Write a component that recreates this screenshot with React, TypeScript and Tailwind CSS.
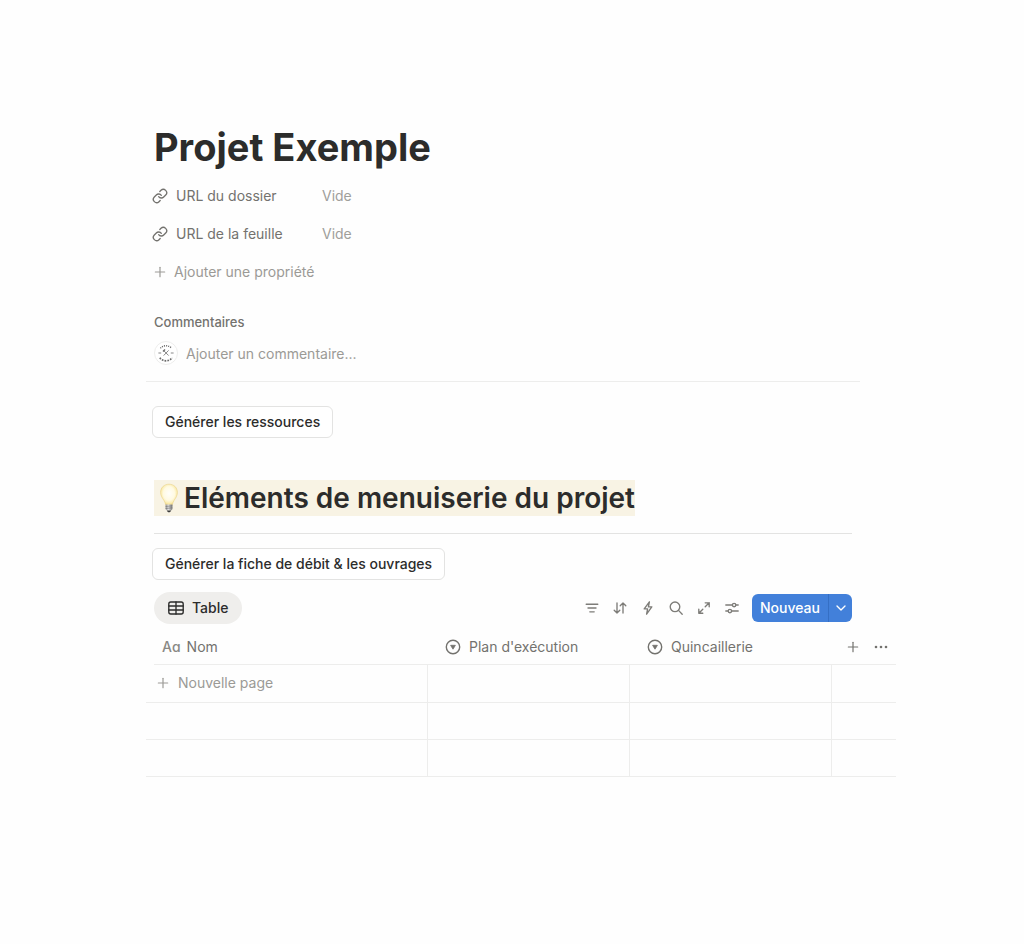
import { useState } from "react";
import type { ReactNode } from "react";
import { ChevronDown, Link, Plus } from "lucide-react";

const properties = [
  { id: "dossier", label: "URL du dossier" },
  { id: "feuille", label: "URL de la feuille" },
];

// Thin-line icon on a 16px grid, shared by the toolbar and the table tab
function LineIcon({ children, className = "size-4" }: { children: ReactNode; className?: string }) {
  return (
    <svg
      className={className}
      viewBox="0 0 16 16"
      fill="none"
      stroke="currentColor"
      strokeWidth={1.35}
      strokeLinecap="round"
      strokeLinejoin="round"
      aria-hidden="true"
    >
      {children}
    </svg>
  );
}

const tools: { label: string; icon: ReactNode }[] = [
  { label: "Filtrer", icon: <path d="M2.2 4.2h11.6M4 8h8M5.8 11.8h4.4" /> },
  {
    label: "Trier",
    icon: <path d="M5 3v10M2.2 10.2 5 13l2.8-2.8M11 13V3M8.2 5.8 11 3l2.8 2.8" />,
  },
  { label: "Automatisations", icon: <path d="M9.4 1.8 4.2 8.9h3.4l-1 5.3 5.2-7.3H8.4z" /> },
  {
    label: "Rechercher",
    icon: (
      <>
        <circle cx="7" cy="6.8" r="4.8" />
        <path d="m10.5 10.4 3.7 3.8" />
      </>
    ),
  },
  {
    label: "Ouvrir en pleine page",
    icon: <path d="M9.2 6.8 13.2 2.8M9.2 2.8h4v4M6.8 9.2l-4 4M2.8 9.2v4h4" />,
  },
  {
    label: "Options",
    icon: (
      <>
        <path d="M1.8 5h6.5M12 5h2.2M1.8 11H4M7.7 11h6.5" />
        <circle cx="10.1" cy="5" r="1.7" />
        <circle cx="5.9" cy="11" r="1.7" />
      </>
    ),
  },
];

function SelectIcon() {
  return (
    <svg className="size-4 shrink-0" viewBox="0 0 16 16" fill="none" aria-hidden="true">
      <circle cx="8" cy="8" r="6.7" stroke="currentColor" strokeWidth={1.4} />
      <path
        d="M5.6 6.3h4.8L8 10.2z"
        fill="currentColor"
        stroke="currentColor"
        strokeWidth={0.8}
        strokeLinejoin="round"
      />
    </svg>
  );
}

function Avatar() {
  return (
    <svg className="size-6 shrink-0" viewBox="0 0 24 24" fill="none" aria-hidden="true">
      <circle cx="12" cy="12" r="11.5" fill="#fff" stroke="#e9e9e7" strokeWidth={0.8} />
      <g stroke="#6b6b6b">
        <path d="M6.4 7.2a7.6 7.6 0 0 1 11.2 0" strokeWidth={1.4} strokeDasharray="1.1 1" />
        <path d="M5.8 16.8a7.9 7.9 0 0 0 12.4 0" strokeWidth={1.7} strokeDasharray="1.7 1.1" />
        <path d="M4.4 12h2.8M16.8 12h2.8" strokeWidth={0.8} />
        <path d="m9.7 9.6 5 5M14.6 9.4l-5 5.2" strokeWidth={0.8} />
        <path d="m9 10.6 2-2" strokeWidth={1.4} />
      </g>
    </svg>
  );
}

function Bulb() {
  return (
    <svg className="h-[30px] w-[30px] shrink-0" viewBox="0 0 30 30" aria-hidden="true">
      <defs>
        <radialGradient id="glass" cx="50%" cy="45%" r="55%">
          <stop offset="0" stopColor="#fffefa" />
          <stop offset="0.6" stopColor="#fffae2" />
          <stop offset="0.85" stopColor="#fbedb2" />
          <stop offset="1" stopColor="#edd686" />
        </radialGradient>
        <linearGradient id="cap" x1="0" x2="1" y1="0" y2="0">
          <stop offset="0" stopColor="#8b8b8b" />
          <stop offset="0.4" stopColor="#e4e4e4" />
          <stop offset="1" stopColor="#777" />
        </linearGradient>
      </defs>
      <path
        d="M15 1.2c-5 0-8.4 3.6-8.4 8.2 0 3.4 1.8 5.6 3.3 8 1 1.6 1.4 3 1.8 4.4h6.6c.4-1.4.8-2.8 1.8-4.4 1.5-2.4 3.3-4.6 3.3-8 0-4.6-3.4-8.2-8.4-8.2z"
        fill="url(#glass)"
        stroke="#e9d288"
        strokeWidth={0.6}
      />
      <path d="M11.6 21.6h6.8v4.6l-1.4 1.4h-4l-1.4-1.4z" fill="url(#cap)" />
      <path d="m11.6 23.5 6.8-.7M11.6 25.5l6.8-.7" stroke="#6c6c6c" strokeWidth={0.6} />
      <path d="M12.8 27.4h4.4c-.4 1.2-1.2 1.8-2.2 1.8s-1.8-.6-2.2-1.8z" fill="#3c3c3c" />
    </svg>
  );
}

function ActionButton({ children }: { children: ReactNode }) {
  return (
    <button
      type="button"
      className="ml-1.5 h-8 rounded-md border border-[#e3e3e2] bg-white px-3 text-sm font-medium text-[#2c2c2b] hover:bg-stone-50"
    >
      {children}
    </button>
  );
}

export default function App() {
  const [comment, setComment] = useState("");

  return (
    <main className="min-h-screen bg-[#fefefe] pt-[122px] pr-[164px] pb-40 pl-[146px] font-['Inter','Liberation_Sans',sans-serif] text-sm text-[#2c2c2b]">
      <h1 className="pl-2 text-[38px] leading-[50px] font-bold">Projet Exemple</h1>

      {/* Page properties */}
      <div className="mt-2 flex flex-col gap-1.5">
        {properties.map((prop) => (
          <div key={prop.id} className="flex h-8 items-center">
            <div className="flex w-[176px] items-center gap-2 pl-1.5 text-[#73726e]">
              <Link className="size-4" strokeWidth={2} aria-hidden="true" />
              <span id={prop.id}>{prop.label}</span>
            </div>
            <button type="button" aria-labelledby={prop.id} className="text-[#a09f9b]">
              Vide
            </button>
          </div>
        ))}
        <button type="button" className="flex h-8 items-center gap-1.5 self-start pl-1.5 text-[#9b9a96]">
          <Plus className="size-4" strokeWidth={1.8} aria-hidden="true" />
          Ajouter une propriété
        </button>
      </div>

      {/* Comments */}
      <section className="mt-6 border-b border-[#ededec] pb-4">
        <h2 className="pl-2 text-[13px] leading-5 font-medium text-[#73726e]">Commentaires</h2>
        <div className="mt-[9px] flex items-center gap-2 pl-2">
          <Avatar />
          <input
            type="text"
            value={comment}
            onChange={(e) => setComment(e.target.value)}
            placeholder="Ajouter un commentaire..."
            aria-label="Ajouter un commentaire"
            className="h-6 flex-1 bg-transparent outline-none placeholder:text-[#9b9a96]"
          />
        </div>
      </section>

      <div className="mt-6">
        <ActionButton>Générer les ressources</ActionButton>
      </div>

      <div className="mx-2 mt-[42px] border-b border-[#e3e3e2] pb-[17px]">
        <h2 className="flex h-9 w-fit items-center bg-[#f8f3e4] text-[28px] leading-9 font-semibold whitespace-nowrap">
          <Bulb />
          Eléments de menuiserie du projet
        </h2>
      </div>

      <div className="mt-3.5">
        <ActionButton>Générer la fiche de débit &amp; les ouvrages</ActionButton>
      </div>

      {/* View tab and database toolbar */}
      <div className="mx-2 mt-3 flex items-center justify-between">
        <button
          type="button"
          className="flex h-8 items-center gap-2 rounded-full bg-[#efeeec] px-3.5 font-medium text-[#2c2c2b]"
        >
          <LineIcon>
            <rect x="0.8" y="2" width="14.4" height="12" rx="2" />
            <path d="M.8 6h14.4M.8 10h14.4M8 2v12" />
          </LineIcon>
          Table
        </button>
        <div className="flex items-center">
          <div className="mr-3 flex gap-3 text-[#7d7c78]">
            {tools.map((tool) => (
              <button key={tool.label} type="button" aria-label={tool.label}>
                <LineIcon>{tool.icon}</LineIcon>
              </button>
            ))}
          </div>
          <div className="flex h-7 overflow-hidden rounded-md bg-[#4280da] text-white">
            <button type="button" className="px-2 font-medium">
              Nouveau
            </button>
            <button
              type="button"
              aria-label="Autres options de création"
              className="flex w-6 items-center justify-center border-l border-[#356fc4]"
            >
              <ChevronDown className="size-4" strokeWidth={2} />
            </button>
          </div>
        </div>
      </div>

      <div className="-mr-9 mt-[5px]">
        <table className="w-full table-fixed border-collapse text-[#73726e]">
          <colgroup>
            <col className="w-[281px]" />
            <col className="w-[202px]" />
            <col className="w-[202px]" />
            <col />
          </colgroup>
          <thead>
            <tr>
              <th scope="col" className="p-0 text-left font-normal">
                <div className="ml-2 flex h-9 items-center gap-1.5 border-b border-[#ededec] pl-2">
                  <span className="font-medium text-[#8a8985]" aria-hidden="true">
                    Aɑ
                  </span>
                  Nom
                </div>
              </th>
              {["Plan d'exécution", "Quincaillerie"].map((name) => (
                <th key={name} scope="col" className="p-0 text-left font-normal">
                  <div className="flex h-9 items-center gap-2 border-b border-[#ededec] pl-[18px]">
                    <SelectIcon />
                    {name}
                  </div>
                </th>
              ))}
              <th scope="col" className="p-0 font-normal">
                <div className="flex h-9 items-center gap-3 border-b border-[#ededec] pl-3.5">
                  <button type="button" aria-label="Ajouter une colonne">
                    <Plus className="size-4" strokeWidth={1.8} />
                  </button>
                  <button type="button" aria-label="Plus d'options">
                    <svg className="size-4" viewBox="0 0 16 16" fill="currentColor" aria-hidden="true">
                      <circle cx="3" cy="8" r="1.3" />
                      <circle cx="8" cy="8" r="1.3" />
                      <circle cx="13" cy="8" r="1.3" />
                    </svg>
                  </button>
                </div>
              </th>
            </tr>
          </thead>
          <tbody>
            {[0, 1, 2].map((row) => (
              <tr key={row} className="h-[37px] border-b border-[#ededec]">
                <td className="border-r border-[#ededec] p-0">
                  {row === 0 && (
                    <button type="button" className="flex items-center gap-[7px] pl-[9px] text-[#9b9a96]">
                      <Plus className="size-4" strokeWidth={1.8} aria-hidden="true" />
                      Nouvelle page
                    </button>
                  )}
                </td>
                <td className="border-r border-[#ededec] p-0" />
                <td className="border-r border-[#ededec] p-0" />
                <td className="p-0" />
              </tr>
            ))}
          </tbody>
        </table>
      </div>
    </main>
  );
}
